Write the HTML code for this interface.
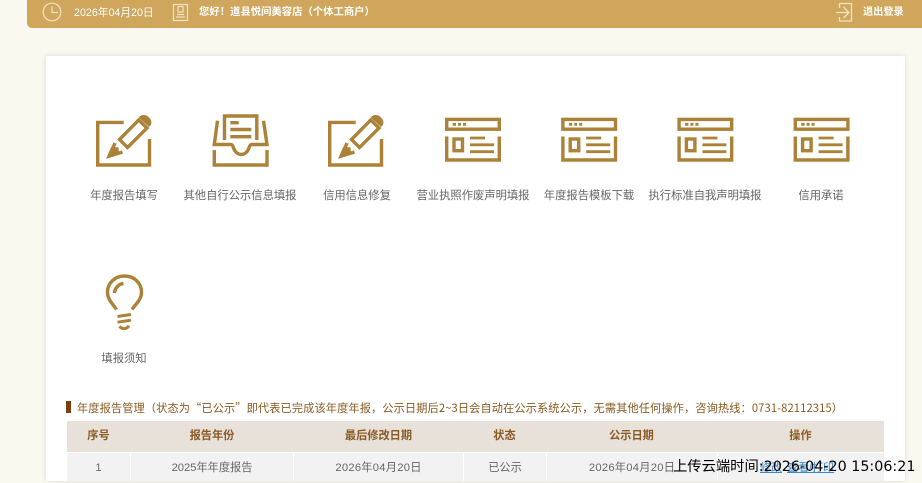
<!DOCTYPE html>
<html lang="zh-CN"><head><meta charset="utf-8"><style>
html,body{margin:0;padding:0;width:922px;height:481px;overflow:hidden;background:#fbf8f0;font-family:"Liberation Sans","Noto Sans CJK SC",sans-serif}
div,a{position:absolute;white-space:nowrap}
#bar{left:27px;top:-4px;width:895px;height:32px;background:#cfa65c;border-radius:0 0 0 5px}
#card{left:46px;top:56px;width:859px;height:425px;background:#fff;box-shadow:0 0 5px rgba(0,0,0,.12)}
.h{color:#fff;font-size:10.7px;line-height:14px;top:6px}
.l{color:#666;font-size:11.3px;line-height:16px;top:188px;width:140px;text-align:center}
.th,.td{text-align:center;font-size:11.2px}
.th{top:421px;height:31px;line-height:31px;color:#8a5a22;font-weight:bold;background:#e8e1d9}
.td{top:453px;height:28px;line-height:30px;color:#666;background:#f2f2f2}
.dt{letter-spacing:.27px}
svg{position:absolute;left:0;top:0}
</style></head><body>
<div id="bar"></div>
<div id="card"></div>
<svg width="922" height="481" viewBox="0 0 922 481" fill="none">
<defs>
<g id="pen" stroke="#ab8237" stroke-width="3.400">
<path d="M123.700 122.400H97.700V165H149.500V139"/>
<path d="M119.500 139.500L138.700 120L147 128L127.500 147.500Z"/>
<path d="M139.800 117.500C142.500 114.800 146 115.500 148.500 118C151 120.500 151.500 123.500 149 126Z" fill="#ab8237" stroke-width="1.500"/>
<path d="M115 143L109.500 156L122.500 152"/>
<path d="M107 157.800L111.500 147.500L118 147.800L118.500 153Z" fill="#ab8237" stroke-width="1"/>
</g>
<g id="win" stroke="#ab8237" stroke-width="3.400">
<rect x="446.700" y="119.400" width="52.600" height="9.800"/>
<path d="M446.700 136.500V160H499.300V136.500"/>
<rect x="454" y="139" width="8.500" height="11.700"/>
<path d="M470 138H485M470 144.800H494M470 151.700H494" stroke-width="2.800"/>
<path d="M452.700 124.300H456M458 124.300H461M463 124.300H466" stroke-width="2.800"/>
</g>
</defs>
<use href="#pen"/>
<use href="#pen" transform="translate(232 0)"/>
<path stroke="#ab8237" stroke-width="3.400" d="M224.500 140V116H256.800V140M230.300 122.700H238.700M230.300 129.500H251.300M230.300 136.700H251.300M217.500 120.700L214.300 144.500H230C232.500 144.500 233 146 233.500 148C235 152 238 154.500 241.300 154.500C244.500 154.500 247.500 152 249 148C249.500 146 250 144.500 252.500 144.500H267L263.500 120.700M214.300 150V165H267V150"/>
<use href="#win"/>
<use href="#win" transform="translate(116.200 0)"/>
<use href="#win" transform="translate(232.400 0)"/>
<use href="#win" transform="translate(348.600 0)"/>
<g stroke="#ab8237" stroke-width="3.400">
<path d="M116.500 309.500C113 304 107.500 300 107.500 292C107.500 283 115 276 124.500 276C134 276 141.500 283 141.500 292C141.500 300 135.500 304 132 309.500"/>
<path d="M114.500 293C115 288 118.500 284 123.500 283.500"/>
<path d="M117.500 316.500L131 314.500M117.500 322.200L131 320.200" stroke-width="3"/>
<path d="M119.500 326.300C122 329.500 127 329.500 128.800 325.500" stroke-width="3"/>
</g>
<g stroke="#f3e3c3" stroke-width="1.200">
<circle cx="52" cy="12" r="8.800"/>
<path d="M52 6.500V12.500H58"/>
<path d="M173.500 4.500H187.500V20.500H173.500Z"/>
<path d="M178 6.500H183V12H178ZM177 14.500H184M176 17H185"/>
<path d="M839.500 3.500H851.500V21H839.500V17M839.500 8V3.500M836 12.500H848M843.500 7L849 12.500L843.500 18" stroke-width="1.300"/>
</g>
</svg>
<div class="h" style="left:74px">2026年04月20日</div>
<div class="h" style="left:199px;font-weight:bold;font-size:10.350px">您好！道县悦间美容店（个体工商户）</div>
<div class="h" style="left:863px;font-weight:bold;font-size:10.200px">退出登录</div>

<div class="l" style="left:54px">年度报告填写</div>
<div class="l" style="left:170px">其他自行公示信息填报</div>
<div class="l" style="left:287px">信用信息修复</div>
<div class="l" style="left:403px">营业执照作废声明填报</div>
<div class="l" style="left:519px">年度报告模板下载</div>
<div class="l" style="left:635px">执行标准自我声明填报</div>
<div class="l" style="left:751px">信用承诺</div>
<div class="l" style="left:54px;top:351px">填报须知</div>

<div style="left:66px;top:401px;width:5px;height:12px;background:#7a3f0c"></div>
<div style="left:77px;top:400px;font-family:'Noto Sans CJK SC',sans-serif;font-size:11.200px;line-height:16px;color:#8a5a22;letter-spacing:.12px">年度报告管理（状态为“已公示”即代表已完成该年度年报，公示日期后2~3日会自动在公示系统公示，无需其他任何操作，咨询热线：0731-82112315）</div>

<div class="th" style="left:67px;width:63px">序号</div>
<div class="th" style="left:130px;width:164px">报告年份</div>
<div class="th" style="left:294px;width:169px">最后修改日期</div>
<div class="th" style="left:463px;width:83px">状态</div>
<div class="th" style="left:546px;width:171px">公示日期</div>
<div class="th" style="left:717px;width:167px;background:#e8e1d9">操作</div>

<div class="td" style="left:67px;width:63px">1</div>
<div class="td" style="left:131px;width:162px">2025年年度报告</div>
<div class="td dt" style="left:294px;width:169px">2026年04月20日</div>
<div class="td" style="left:464px;width:82px">已公示</div>
<div class="td dt" style="left:547px;width:170px">2026年04月20日</div>
<div class="td" style="left:718px;width:166px"></div>
<a style="left:760px;top:461px;font-size:11px;line-height:15px;color:#3a88c8;text-decoration:underline">修改</a>
<a style="left:787px;top:461px;font-size:11px;line-height:15px;color:#3a88c8;text-decoration:underline">查看/打印</a>
<div style="left:673px;top:459px;font-family:'DejaVu Sans','Noto Sans CJK SC',sans-serif;font-size:14.300px;line-height:17px;color:#000">上传云端时间:2026-04-20 15:06:21</div>
</body></html>
